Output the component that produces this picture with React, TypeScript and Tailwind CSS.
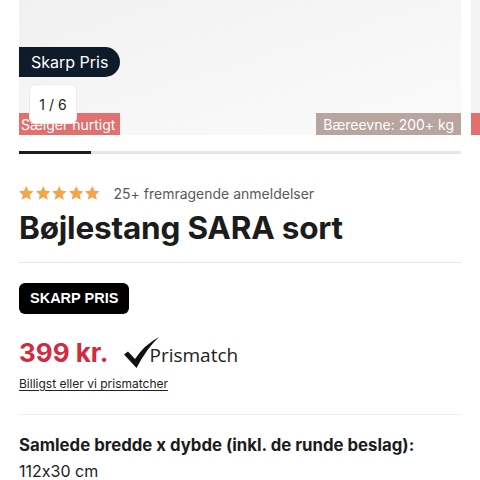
import { FunctionComponent } from "react";

const Star: FunctionComponent = () => (
  <svg viewBox="2.5 2.5 19 18.2" className="w-[14.5px] h-[14px]" fill="#f2a54a">
    <path d="M12 2.5l2.9 6.1 6.6.8-4.9 4.6 1.3 6.6L12 17.3l-5.9 3.3 1.3-6.6-4.9-4.6 6.6-.8z" />
  </svg>
);

const App: FunctionComponent = () => {
  return (
    <div className="w-[480px] h-[480px] overflow-hidden bg-white text-[#1c1c1c] font-['Inter',sans-serif] [font-feature-settings:'calt'_0]">
      {/* gallery */}
      <div className="flex gap-[10px] pl-[19px] overflow-hidden">
        <div className="relative shrink-0 w-[442px] h-[135px] bg-gradient-to-br from-[#f1f1f1] to-[#fbfbfb]">
          <div className="absolute left-0 top-[47px] h-[30px] w-[101px] rounded-r-full bg-[#0e1b2b] text-white text-[16px] flex items-center pl-[12px]">
            Skarp Pris
          </div>
          <div className="absolute left-0 bottom-0 h-[22px] w-[101px] bg-[#e0716f] text-white text-[14px] flex items-center pl-[2px] whitespace-nowrap">
            Sælger hurtigt
          </div>
          <div className="absolute left-[10px] top-[84px] w-[48px] h-[40px] rounded-[6px] bg-white border border-[#ececec] flex items-center justify-center text-[14px] text-[#222]">
            1 / 6
          </div>
          <div className="absolute right-0 bottom-0 h-[22px] px-[7px] bg-[#b8a59d] text-white text-[14px] flex items-center whitespace-nowrap">
            Bæreevne: 200+ kg
          </div>
        </div>
        <div className="relative shrink-0 w-[442px] h-[135px] bg-[#f3f3f3] overflow-hidden">
          <div className="absolute left-0 bottom-0 h-[22px] w-[40px] bg-[#e0716f]" />
        </div>
      </div>

      <div className="px-[19px]">
        {/* progress */}
        <div className="mt-[16px] h-[3px] bg-[#e6e6e6] flex">
          <div className="w-[72px] bg-[#1c1c1c]" />
        </div>

        {/* rating */}
        <div className="mt-[29px] h-[20px] flex items-center gap-[14px]">
          <div className="flex gap-[2px]">
            <Star />
            <Star />
            <Star />
            <Star />
            <Star />
          </div>
          <span className="text-[14px] text-[#5a5a5a]">25+ fremragende anmeldelser</span>
        </div>

        <h1 className="mt-[7px] text-[31.5px] leading-[36px] font-bold tracking-[-0.2px]">Bøjlestang SARA sort</h1>

        <div className="mt-[16px] h-px bg-[#e4e4e4]" />

        <div className="mt-[20px] inline-flex h-[31px] items-center px-[11px] rounded-[6px] bg-black text-white text-[14.5px] font-bold font-['Liberation_Sans',sans-serif]">
          SKARP PRIS
        </div>

        <div className="mt-[22px] h-[32px] flex items-center gap-[16px]">
          <span className="text-[26px] font-bold text-[#d12b3f]">399 kr.</span>
          <div className="flex items-end">
            <svg viewBox="0 0 35 31" className="w-[35px] h-[31px]">
              <path d="M0 17.5 L4 14.5 L11 22 Q20 8 35 0 Q23 11 12.5 31 Z" fill="#111" />
            </svg>
            <span className="text-[19px] leading-[22px] text-[#222] font-['Open_Sans',sans-serif] -ml-[10px] mb-[2px]">Prismatch</span>
          </div>
        </div>

        <div className="mt-[7px] text-[12px] leading-[18px] underline underline-offset-2 text-[#222]">Billigst eller vi prismatcher</div>

        <div className="mt-[21px] h-px bg-[#ececec]" />

        <div className="mt-[18px] text-[16.8px] leading-[24px] font-bold">Samlede bredde x dybde (inkl. de runde beslag):</div>
        <div className="mt-[2px] text-[16px] leading-[24px]">112x30 cm</div>
      </div>
    </div>
  );
};

export default App;
